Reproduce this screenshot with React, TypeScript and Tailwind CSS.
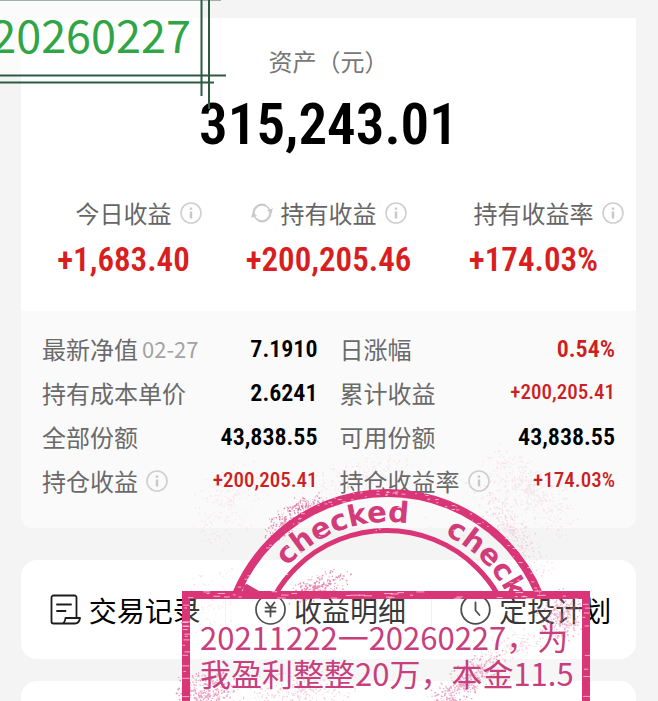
import type { ReactNode } from "react";

const CJK = "font-['Noto_Sans_CJK_SC',sans-serif]";
const NUM = "font-['Roboto_Condensed','Roboto',sans-serif]";

function InfoIcon() {
  return (
    <svg viewBox="0 0 22 22" className="size-[22px] shrink-0" fill="none" aria-hidden="true">
      <circle cx="11" cy="11" r="10" stroke="#cfcfcf" strokeWidth="1.6" />
      <path d="M11 5.4v2.4M11 9.6v7" stroke="#c8c8c8" strokeWidth="2.4" />
    </svg>
  );
}

function RefreshIcon() {
  return (
    <svg viewBox="0 0 22 22" className="size-[22px] shrink-0" fill="none" aria-hidden="true">
      <path d="M3 13A8.200 8.200 0 0 1 14.500 3.600M19 9A8.200 8.200 0 0 1 7.500 18.400" stroke="#cbcbcb" strokeWidth="2.2" />
      <path d="M16 8.200 22 6.200 20.500 11.500ZM6 13.800 0 15.800 1.500 10.500Z" fill="#cbcbcb" />
      <path d="M14 3.500A8.200 8.200 0 0 1 18.700 8M8 18.500A8.200 8.200 0 0 1 3.300 14" stroke="#cbcbcb" strokeWidth="1.6" />
    </svg>
  );
}

function RecordIcon() {
  return (
    <svg viewBox="0 0 31 31" className="size-[31px] shrink-0" fill="none" stroke="#1c1c1c" strokeWidth="1.8" strokeLinejoin="round" strokeLinecap="round" aria-hidden="true">
      <path d="M26.500 23.500V3.500a2 2 0 0 0-2-2H3.500a2 2 0 0 0-2 2V27.500a2 2 0 0 0 2 2H25c3 0 4.500-2.500 5-5.500H15.500c-.3 3-1.500 5-3.500 5.500" />
      <path d="M7 10.500h14M7 17h8.500" />
    </svg>
  );
}

function YenIcon() {
  return (
    <svg viewBox="0 0 31 31" className="size-[31px] shrink-0" fill="none" stroke="#1c1c1c" strokeWidth="1.8" strokeLinecap="round" aria-hidden="true">
      <circle cx="15.500" cy="15.500" r="14.500" strokeWidth="1.700" />
      <path d="M11.500 8.500l4 5 4-5M10.500 13.700h10M10.500 17.500h10M15.500 13.700v8.800" />
    </svg>
  );
}

function ClockIcon() {
  return (
    <svg viewBox="0 0 31 31" className="size-[31px] shrink-0" fill="none" stroke="#1c1c1c" strokeWidth="1.800" strokeLinecap="round" aria-hidden="true">
      <circle cx="15.500" cy="15.500" r="14.300" />
      <path d="M15.500 8.500v8l4 4.500" />
    </svg>
  );
}

function Summary({ label, value, lead }: { label: string; value: string; lead?: ReactNode }) {
  return (
    <div className="flex flex-1 flex-col items-center">
      <div className="flex items-center gap-2 whitespace-nowrap text-2xl text-[#666]">
        {lead ?? <span className="w-[22px]" />}
        <span>{label}</span>
        <InfoIcon />
      </div>
      <div className={`${NUM} mt-[11px] text-[33px] font-semibold leading-10 text-[#d81e1e]`}>{value}</div>
    </div>
  );
}

type RowProps = { label: string; value: string; date?: string; info?: boolean; tone?: "plain" | "up" | "gain" };

const TONES = {
  plain: "text-[24px] font-semibold text-black",
  up: "text-[24px] font-semibold text-[#cc1f1f]",
  gain: "text-[21px] font-medium text-[#cc1f1f]",
};

function Row({ label, value, date, info, tone = "plain" }: RowProps) {
  return (
    <div className="flex h-11 items-center justify-between whitespace-nowrap">
      <dt className="flex items-center text-2xl text-[#6a6a6a]">
        {label}
        {date && <span className="ml-1 text-[22px] text-[#a3a3a3]">{date}</span>}
        {info && <span className="ml-2"><InfoIcon /></span>}
      </dt>
      <dd className={`${NUM} ${TONES[tone]}`}>{value}</dd>
    </div>
  );
}

function Action({ icon, label }: { icon: ReactNode; label: string }) {
  return (
    <button type="button" className="flex flex-1 items-center justify-center gap-2 whitespace-nowrap pl-1 text-[28px] text-black">
      {icon}
      {label}
    </button>
  );
}

function DateMark() {
  return (
    <div className="absolute left-0 top-0">
      <div className="flex h-[76px] w-[202px] items-start justify-end bg-white/60 pr-[11px] pt-[11px]">
        <span className="text-[45px] leading-[45px] text-[#2fa545]">20260227</span>
      </div>
      <svg viewBox="0 0 230 112" className="absolute left-0 top-0 h-[112px] w-[230px]" fill="none" stroke="#2d5a42" strokeWidth="2" aria-hidden="true">
        <path d="M0 .3H221" stroke="#8d9b93" strokeWidth="1" />
        <path d="M0 75.500H226M0 82.500H214M201.500 0V96M209 0V109" />
      </svg>
    </div>
  );
}

function makeRandom(seed: number) {
  let s = seed;
  return () => {
    s = (s * 1664525 + 1013904223) % 4294967296;
    return s / 4294967296;
  };
}

type Cluster = { x: number; y: number; rx: number; ry: number; turn: number; count: number; size: number; opacity: number };

// Ink spatter, in the coordinates of the stamp drawing.
const CLUSTERS: Cluster[] = [
  { x: 284, y: 520, rx: 24, ry: 11, turn: -45, count: 130, size: 1.4, opacity: 0.6 },
  { x: 306, y: 504, rx: 22, ry: 8, turn: -20, count: 90, size: 1.4, opacity: 0.6 },
  { x: 318, y: 586, rx: 32, ry: 11, turn: -20, count: 210, size: 1.5, opacity: 0.6 },
  { x: 230, y: 500, rx: 30, ry: 46, turn: 30, count: 300, size: 1.3, opacity: 0.1 },
  { x: 530, y: 490, rx: 52, ry: 24, turn: 40, count: 480, size: 1.4, opacity: 0.11 },
  { x: 512, y: 530, rx: 56, ry: 14, turn: 50, count: 280, size: 1.4, opacity: 0.18 },
  { x: 360, y: 474, rx: 60, ry: 14, turn: -8, count: 240, size: 1.3, opacity: 0.11 },
  { x: 560, y: 616, rx: 19, ry: 24, turn: 10, count: 300, size: 1.5, opacity: 0.5 },
  { x: 515, y: 645, rx: 34, ry: 12, turn: -20, count: 150, size: 1.3, opacity: 0.28 },
  { x: 462, y: 684, rx: 46, ry: 15, turn: -40, count: 380, size: 1.5, opacity: 0.6 },
  { x: 206, y: 694, rx: 30, ry: 22, turn: 0, count: 360, size: 1.5, opacity: 0.6 },
  { x: 300, y: 690, rx: 50, ry: 22, turn: 0, count: 320, size: 1.4, opacity: 0.3 },
  { x: 212, y: 600, rx: 22, ry: 40, turn: 0, count: 110, size: 1.3, opacity: 0.18 },
];

function spatterPath(c: Cluster, seed: number) {
  const rand = makeRandom(seed);
  const cos = Math.cos((c.turn * Math.PI) / 180);
  const sin = Math.sin((c.turn * Math.PI) / 180);
  let d = "";
  for (let i = 0; i < c.count; i++) {
    const a = rand() * Math.PI * 2;
    const r = Math.pow(rand(), 0.8) * (0.8 + rand() * 0.5);
    const u = Math.cos(a) * r * c.rx;
    const v = Math.sin(a) * r * c.ry;
    const w = (0.5 + rand() * 0.7) * c.size;
    d += `M${(c.x + u * cos - v * sin).toFixed(1)} ${(c.y + u * sin + v * cos).toFixed(1)}h${w.toFixed(1)}v${w.toFixed(1)}h-${w.toFixed(1)}z`;
  }
  return d;
}

// Worn spots along the frame and the two rings.
function wearPath() {
  const rand = makeRandom(77);
  let d = "";
  for (let i = 0; i < 36; i++) {
    d += `M${(186 + rand() * 396).toFixed(1)} ${(591 + rand() * 9).toFixed(1)}h${(2 + rand() * 7).toFixed(1)}`;
  }
  for (let i = 0; i < 26; i++) {
    const x = rand() > 0.5 ? 182 : 582;
    d += `M${(x + rand() * 3).toFixed(1)} ${(600 + rand() * 100).toFixed(1)}h${(2 + rand() * 6).toFixed(1)}`;
  }
  for (let i = 0; i < 110; i++) {
    const a = Math.PI * (1.12 + rand() * 0.76);
    const r = rand() > 0.4 ? 160 + rand() * 8 : 127 + rand() * 24;
    d += `M${(387.5 + r * Math.cos(a)).toFixed(1)} ${(657 + r * Math.sin(a)).toFixed(1)}h${(1 + rand() * 3).toFixed(1)}`;
  }
  return d;
}

function Stamp() {
  return (
    <div className="pointer-events-none absolute left-0 top-0">
      <svg viewBox="0 0 658 720" className="h-[720px] w-[658px]" fill="none" aria-hidden="true">
        <defs>
          <clipPath id="above-frame">
            <path d="M0 0H658V593H0Z" />
          </clipPath>
          <path id="word-arc" d="M252.500 657A135 135 0 0 1 522.500 657" />
        </defs>
        {CLUSTERS.map((c, i) => (
          <path key={i} d={spatterPath(c, 11 + i * 37)} fill="#d6417d" opacity={c.opacity} />
        ))}
        <path d="M190 599H582V720H190Z" fill="#fff" fillOpacity=".22" />
        <g clipPath="url(#above-frame)" stroke="#da3577">
          <circle cx="387.500" cy="657" r="164" strokeWidth="8" />
          <circle cx="386.500" cy="659" r="128.500" strokeWidth="5" />
        </g>
        <g clipPath="url(#above-frame)" fill="#d23c7b" className="font-['DejaVu_Sans',sans-serif] text-[29px] font-bold">
          <text><textPath href="#word-arc" startOffset="99">checked</textPath></text>
          <text><textPath href="#word-arc" startOffset="271">check</textPath></text>
          <path d="M244 585l3-1 12 7-1 3h-16z" />
        </g>
        <path d="M186 720V595H586V720" stroke="#da3577" strokeWidth="8" />
        <path d={wearPath()} stroke="#fbe3ec" strokeWidth=".9" opacity=".8" />
      </svg>
      <p className="absolute left-[200px] top-[619px] whitespace-nowrap text-[31px] leading-9 text-[#c83f7d]">
        20211222一20260227，为
        <br />
        我盈利整整20万，本金11.5
      </p>
    </div>
  );
}

export default function App() {
  return (
    <main className={`${CJK} relative h-screen overflow-hidden bg-[#f4f4f4] pl-[21px] pr-[22px] pt-[18px]`}>
      <section className="overflow-hidden rounded-b-xl bg-white">
        <div className="flex h-[293px] flex-col">
          <h1 className="mt-[23px] text-center text-2xl leading-10 text-[#777]">资产（元）</h1>
          <div className={`${NUM} mt-3 text-center text-[57px] font-semibold leading-[64px] text-black`}>315,243.01</div>
          <div className="mt-10 flex">
            <Summary label="今日收益" value="+1,683.40" />
            <Summary label="持有收益" value="+200,205.46" lead={<RefreshIcon />} />
            <Summary label="持有收益率" value="+174.03%" />
          </div>
        </div>
        <div className="grid grid-cols-2 gap-x-[22px] bg-[#fafafa] px-[21px] pb-[25px] pt-4">
          <dl>
            <Row label="最新净值" date="02-27" value="7.1910" />
            <Row label="持有成本单价" value="2.6241" />
            <Row label="全部份额" value="43,838.55" />
            <Row label="持仓收益" info value="+200,205.41" tone="gain" />
          </dl>
          <dl>
            <Row label="日涨幅" value="0.54%" tone="up" />
            <Row label="累计收益" value="+200,205.41" tone="gain" />
            <Row label="可用份额" value="43,838.55" />
            <Row label="持仓收益率" info value="+174.03%" tone="gain" />
          </dl>
        </div>
      </section>
      <nav className="mt-8 flex h-[99px] items-center rounded-2xl bg-white">
        <Action icon={<RecordIcon />} label="交易记录" />
        <span className="h-8 w-px bg-[#ededed]" />
        <Action icon={<YenIcon />} label="收益明细" />
        <span className="h-8 w-px bg-[#ededed]" />
        <Action icon={<ClockIcon />} label="定投计划" />
      </nav>
      <section className="mt-[22px] h-24 rounded-2xl bg-white" />
      <DateMark />
      <Stamp />
    </main>
  );
}
